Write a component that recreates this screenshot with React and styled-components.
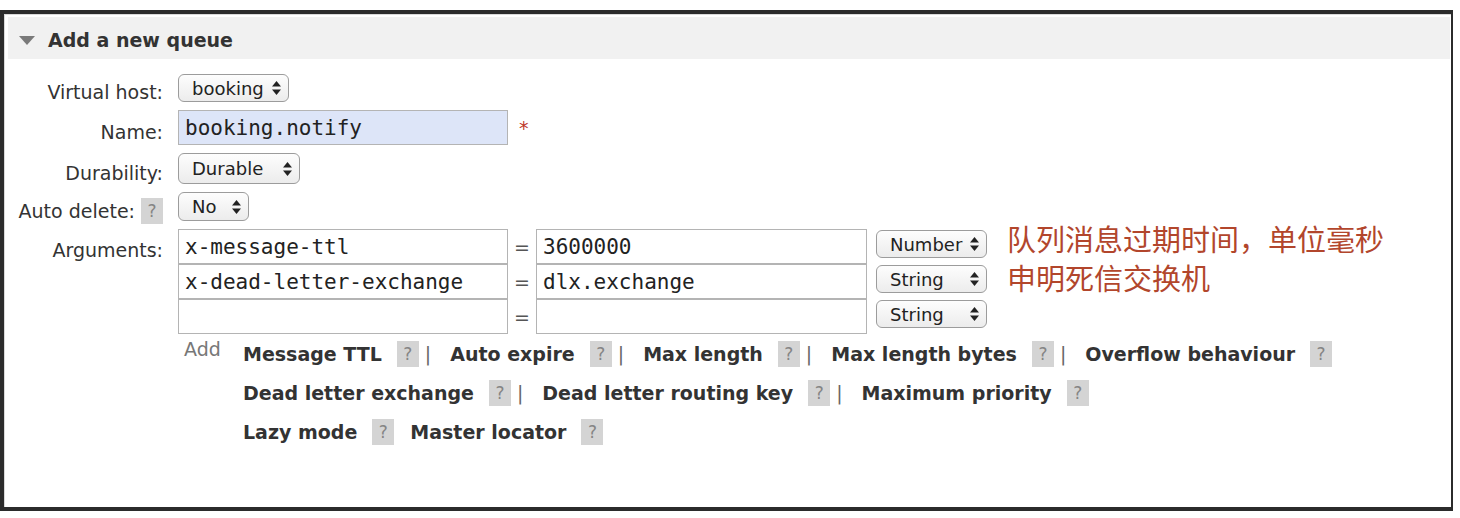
import React from "react";
import styled, { createGlobalStyle } from "styled-components";

const Global = createGlobalStyle`
  html, body { margin: 0; padding: 0; background: #fff; }
  body { font-family: "DejaVu Sans", Verdana, sans-serif; color: #333; }
`;

const Frame = styled.div`
  box-sizing: border-box;
  margin-top: 10px;
  width: 1453px;
  height: 501px;
  background: #fff;
  border-top: 4px solid #2b2b2b;
  border-left: 4px solid #2b2b2b;
  border-right: 2px solid #2b2b2b;
  border-bottom: 4px solid #2b2b2b;
  box-shadow: inset 1px 1px 0 #d9d9d9;
  padding: 3px 1px 0 4px;
`;

const Header = styled.h2`
  box-sizing: border-box;
  margin: 0;
  height: 42px;
  display: flex;
  align-items: center;
  gap: 13px;
  padding: 4px 0 0 11px;
  background: #f1f1f1;
  font-size: 19px;
  font-weight: bold;
  color: #333;
`;

const Triangle = styled.span`
  width: 0;
  height: 0;
  border-left: 8px solid transparent;
  border-right: 8px solid transparent;
  border-top: 9px solid #7a7a7a;
`;

const Form = styled.div`
  display: grid;
  grid-template-columns: 155px auto;
  column-gap: 15px;
  row-gap: 8px;
  align-items: center;
  padding-top: 15px;
`;

const Label = styled.label`
  box-sizing: border-box;
  display: flex;
  justify-content: flex-end;
  align-items: center;
  gap: 6px;
  font-size: 19px;
  color: #333;
  align-self: ${(p) => (p.$top ? "start" : "center")};
  line-height: ${(p) => (p.$top ? "37px" : "normal")};
  padding-top: ${(p) => (p.$top ? 3 : 4)}px;
  margin-bottom: ${(p) => (p.$top ? 0 : -4)}px;
`;

const Help = styled.span`
  display: inline-flex;
  align-items: center;
  justify-content: center;
  width: 22px;
  height: 26px;
  background: #d4d4d4;
  color: #858585;
  font-size: 17px;
  font-weight: normal;
  margin-left: ${(p) => p.$ml ?? 0}px;
  flex: none;
`;

const SelectBox = styled.div`
  box-sizing: border-box;
  display: flex;
  align-items: center;
  justify-content: space-between;
  width: ${(p) => p.$w}px;
  height: ${(p) => p.$h || 28}px;
  padding: 0 6px 0 13px;
  border: 1px solid #9c9c9c;
  border-radius: 6px;
  background: linear-gradient(#fdfdfd, #ececec);
  font-size: 18px;
  color: #222;
  flex: none;
`;

const Arrows = () => (
  <svg width="11" height="16" viewBox="0 0 11 16">
    <path d="M1 6.5 L5.5 1 L10 6.5 Z" fill="#222" />
    <path d="M1 9.5 L5.5 15 L10 9.5 Z" fill="#222" />
  </svg>
);

const Select = ({ value, w, h }) => (
  <SelectBox $w={w} $h={h}>
    <span>{value}</span>
    <Arrows />
  </SelectBox>
);

const Control = styled.div`
  display: flex;
  align-items: center;
`;

const TextInput = styled.div`
  box-sizing: border-box;
  width: ${(p) => p.$w || 330}px;
  height: 35px;
  padding-left: 6px;
  display: flex;
  align-items: center;
  border: 1px solid #b4b4b4;
  background: ${(p) => (p.$blue ? "#dde5f8" : "#fff")};
  font-family: "DejaVu Sans Mono", Menlo, monospace;
  font-size: 21px;
  color: #222;
  flex: none;
`;

const Required = styled.span`
  margin-left: 11px;
  color: #c0392b;
  font-size: 19px;
`;

const ArgsWrap = styled.div`
  display: flex;
  flex-direction: column;
`;

const ArgsTop = styled.div`
  display: flex;
  align-items: flex-start;
`;

const ArgsTable = styled.div`
  display: flex;
  flex-direction: column;
`;

const ArgRow = styled.div`
  display: flex;
  align-items: flex-start;
`;

const Eq = styled.span`
  width: 28px;
  height: 35px;
  display: flex;
  align-items: center;
  justify-content: center;
  color: #555;
  font-size: 19px;
  flex: none;
`;

const TypeSlot = styled.div`
  margin-left: 9px;
  padding-top: 1px;
`;

const Note = styled.div`
  margin-left: 20px;
  margin-top: -10px;
  font-family: "Noto Sans CJK SC", "DejaVu Sans", sans-serif;
  font-size: 29px;
  line-height: 39px;
  color: #b2462c;
`;

const AddRow = styled.div`
  display: flex;
  align-items: flex-start;
`;

const AddLabel = styled.span`
  width: 59px;
  padding-left: 6px;
  line-height: 30px;
  font-size: 19px;
  color: #777;
  flex: none;
`;

const Links = styled.div`
  display: flex;
  flex-direction: column;
`;

const LinkLine = styled.div`
  display: flex;
  align-items: center;
  height: 39px;
`;

const LinkText = styled.span`
  font-weight: bold;
  font-size: 19px;
  color: #333;
  white-space: nowrap;
`;

const Sep = styled.span`
  margin: 0 19px 0 6px;
  font-size: 19px;
  color: #666;
`;

const Gap = styled.span`
  width: 16px;
`;

const lines = [
  [
    ["Message TTL", true],
    ["Auto expire", true],
    ["Max length", true],
    ["Max length bytes", true],
    ["Overflow behaviour", false],
  ],
  [
    ["Dead letter exchange", true],
    ["Dead letter routing key", true],
    ["Maximum priority", false],
  ],
  [
    ["Lazy mode", "gap"],
    ["Master locator", false],
  ],
];

const args = [
  { k: "x-message-ttl", v: "3600000", t: "Number" },
  { k: "x-dead-letter-exchange", v: "dlx.exchange", t: "String" },
  { k: "", v: "", t: "String" },
];

export default function App() {
  return (
    <>
      <Global />
      <Frame>
        <Header>
          <Triangle />
          Add a new queue
        </Header>
        <Form>
          <Label>Virtual host:</Label>
          <Control>
            <Select value="booking" w={111} />
          </Control>

          <Label>Name:</Label>
          <Control>
            <TextInput $blue>booking.notify</TextInput>
            <Required>*</Required>
          </Control>

          <Label>Durability:</Label>
          <Control>
            <Select value="Durable" w={122} h={31} />
          </Control>

          <Label>
            Auto delete: <Help>?</Help>
          </Label>
          <Control>
            <Select value="No" w={71} h={29} />
          </Control>

          <Label $top>Arguments:</Label>
          <ArgsWrap>
            <ArgsTop>
              <ArgsTable>
                {args.map((a, i) => (
                  <ArgRow key={i}>
                    <TextInput>{a.k}</TextInput>
                    <Eq>=</Eq>
                    <TextInput $w={331}>{a.v}</TextInput>
                    <TypeSlot>
                      <Select value={a.t} w={111} />
                    </TypeSlot>
                  </ArgRow>
                ))}
              </ArgsTable>
              <Note>
                <div>队列消息过期时间，单位毫秒</div>
                <div>申明死信交换机</div>
              </Note>
            </ArgsTop>
            <AddRow>
              <AddLabel>Add</AddLabel>
              <Links>
                {lines.map((line, li) => (
                  <LinkLine key={li}>
                    {line.map(([text, after]) => (
                      <React.Fragment key={text}>
                        <LinkText>{text}</LinkText>
                        <Help $ml={15}>?</Help>
                        {after === true && <Sep>|</Sep>}
                        {after === "gap" && <Gap />}
                      </React.Fragment>
                    ))}
                  </LinkLine>
                ))}
              </Links>
            </AddRow>
          </ArgsWrap>
        </Form>
      </Frame>
    </>
  );
}
